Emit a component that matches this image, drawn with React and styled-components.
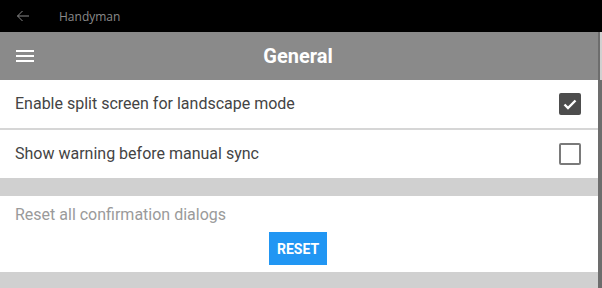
import React from 'react';
import styled, { createGlobalStyle } from 'styled-components';

const GlobalStyle = createGlobalStyle`
  html, body {
    margin: 0;
    padding: 0;
    background: #d0d0d0;
  }
  body {
    font-family: Roboto, "Liberation Sans", sans-serif;
  }
  * {
    box-sizing: border-box;
  }
`;

const Window = styled.div`
  width: 602px;
  height: 288px;
  display: flex;
  flex-direction: column;
  overflow: hidden;
`;

const TitleBar = styled.div`
  height: 32px;
  background: #000;
  display: flex;
  align-items: center;
  padding-left: 16px;
  gap: 29px;
  flex-shrink: 0;
`;

const TitleText = styled.span`
  font-family: "Open Sans", "Noto Sans", sans-serif;
  font-size: 12px;
  color: #8a8a8a;
`;

const Body = styled.div`
  flex: 1;
  display: flex;
`;

const Main = styled.div`
  flex: 1;
  display: flex;
  flex-direction: column;
`;

const ScrollBar = styled.div`
  width: 4px;
  display: flex;
  flex-direction: column;
`;

const ScrollTrack = styled.div`
  height: 48px;
  background: #d0d0d0;
  border-left: 2px solid #6d6d6d;
`;

const ScrollThumb = styled.div`
  flex: 1;
  background: #6d6d6d;
`;

const Header = styled.div`
  height: 48px;
  background: #8a8a8a;
  display: flex;
  align-items: center;
  padding-left: 16px;
`;

const Burger = styled.div`
  width: 18px;
  display: flex;
  flex-direction: column;
  gap: 3px;
  span {
    display: block;
    height: 2px;
    background: #fff;
  }
`;

const HeaderTitle = styled.h1`
  flex: 1;
  margin: 0 0 0 -36px;
  text-align: center;
  font-size: 20px;
  font-weight: 700;
  color: #fff;
`;

const Group = styled.div`
  background: #fff;
  display: flex;
  flex-direction: column;
`;

const Row = styled.label`
  height: ${(p) => p.h || 48}px;
  display: flex;
  align-items: center;
  justify-content: space-between;
  padding: 0 17px 0 15px;
  font-size: 16px;
  color: #444;
  border-bottom: ${(p) => (p.divider ? '2px solid #d6d6d6' : 'none')};
`;

const Check = styled.span`
  width: 22px;
  height: 22px;
  border-radius: 2px;
  display: flex;
  align-items: center;
  justify-content: center;
  background: ${(p) => (p.checked ? '#4d4d4d' : '#fff')};
  border: 2px solid ${(p) => (p.checked ? '#4d4d4d' : '#7a7a7a')};
`;

const Gap = styled.div`
  height: 18px;
  background: #d0d0d0;
`;

const ResetSection = styled.div`
  background: #fff;
  height: 76px;
  padding: 9px 15px 7px;
  display: flex;
  flex-direction: column;
`;

const Hint = styled.div`
  font-size: 16px;
  line-height: 20px;
  color: #9a9a9a;
`;

const ResetButton = styled.button`
  align-self: center;
  margin-top: 7px;
  margin-left: -2px;
  width: 58px;
  height: 33px;
  border: none;
  background: #2196f3;
  color: #fff;
  font-family: Roboto, sans-serif;
  font-weight: 700;
  font-size: 14px;
  padding: 0;
`;

function CheckBox({ checked }) {
  return (
    <Check checked={checked}>
      {checked && (
        <svg width="16" height="16" viewBox="0 0 16 16">
          <path d="M2.5 8.5l3.5 3.5 7.5-7.5" fill="none" stroke="#fff" strokeWidth="2.4" />
        </svg>
      )}
    </Check>
  );
}

export default function App() {
  return (
    <Window>
      <GlobalStyle />
      <TitleBar>
        <svg width="14" height="12" viewBox="0 0 14 12">
          <path d="M13 6H1.5M6.5 1L1.5 6l5 5" fill="none" stroke="#8a8a8a" strokeWidth="1" />
        </svg>
        <TitleText>Handyman</TitleText>
      </TitleBar>
      <Body>
        <Main>
          <Header>
            <Burger>
              <span />
              <span />
              <span />
            </Burger>
            <HeaderTitle>General</HeaderTitle>
          </Header>
          <Group>
            <Row divider h={49.5}>
              Enable split screen for landscape mode
              <CheckBox checked />
            </Row>
            <Row h={48.5}>
              Show warning before manual sync
              <CheckBox />
            </Row>
          </Group>
          <Gap />
          <ResetSection>
            <Hint>Reset all confirmation dialogs</Hint>
            <ResetButton>RESET</ResetButton>
          </ResetSection>
        </Main>
        <ScrollBar>
          <ScrollTrack />
          <ScrollThumb />
        </ScrollBar>
      </Body>
    </Window>
  );
}
